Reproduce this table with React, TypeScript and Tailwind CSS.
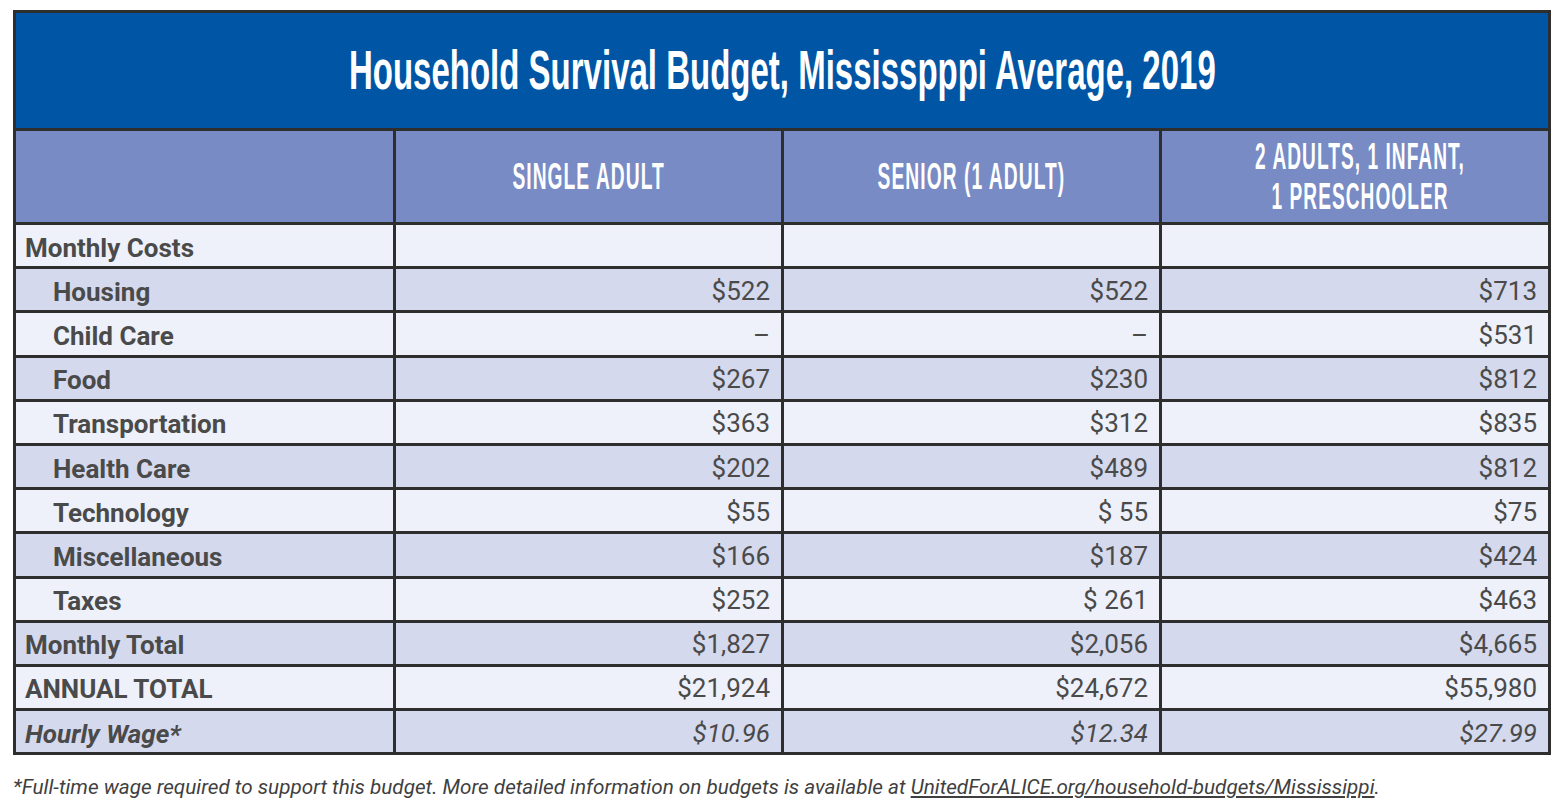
const rows: { label: string; vals: string[]; kind: 'head' | 'item' | 'total' | 'wage' }[] = [
  { label: 'Monthly Costs', vals: ['', '', ''], kind: 'head' },
  { label: 'Housing', vals: ['$522', '$522', '$713'], kind: 'item' },
  { label: 'Child Care', vals: ['–', '–', '$531'], kind: 'item' },
  { label: 'Food', vals: ['$267', '$230', '$812'], kind: 'item' },
  { label: 'Transportation', vals: ['$363', '$312', '$835'], kind: 'item' },
  { label: 'Health Care', vals: ['$202', '$489', '$812'], kind: 'item' },
  { label: 'Technology', vals: ['$55', '$ 55', '$75'], kind: 'item' },
  { label: 'Miscellaneous', vals: ['$166', '$187', '$424'], kind: 'item' },
  { label: 'Taxes', vals: ['$252', '$ 261', '$463'], kind: 'item' },
  { label: 'Monthly Total', vals: ['$1,827', '$2,056', '$4,665'], kind: 'total' },
  { label: 'ANNUAL TOTAL', vals: ['$21,924', '$24,672', '$55,980'], kind: 'total' },
  { label: 'Hourly Wage*', vals: ['$10.96', '$12.34', '$27.99'], kind: 'wage' },
];

const cols = ['SINGLE ADULT', 'SENIOR (1 ADULT)'];

export default function App() {
  return (
    <div className="w-[1567px] h-[807px] bg-white pt-[10px] pl-[13px] font-['Roboto',sans-serif] text-[#4a4a4a]">
      <table className="w-[1538px] border-collapse border-[3px] border-[#2e2e2e] table-fixed">
        <colgroup>
          <col className="w-[380px]" />
          <col className="w-[388px]" />
          <col className="w-[378px]" />
          <col />
        </colgroup>
        <thead>
          <tr>
            <th colSpan={4} className="h-[118px] bg-[#0055a5] border-[3px] border-[#2e2e2e] p-0">
              <span className="inline-block scale-x-[0.6] scale-y-[1.02] font-['Liberation_Sans_Narrow','Liberation_Sans',sans-serif] text-[55px] font-bold text-white whitespace-nowrap">
                Household Survival Budget, Mississpppi Average, 2019
              </span>
            </th>
          </tr>
          <tr>
            <th className="h-[94px] bg-[#798bc4] border-[3px] border-[#2e2e2e]"></th>
            {cols.map((c) => (
              <th key={c} className="h-[94px] bg-[#798bc4] border-[3px] border-[#2e2e2e] p-0">
                <span className="inline-block scale-x-[0.52] font-['Liberation_Sans_Narrow','Liberation_Sans',sans-serif] text-[37px] font-bold text-white whitespace-nowrap leading-none tracking-[2px]">
                  {c}
                </span>
              </th>
            ))}
            <th className="h-[94px] bg-[#798bc4] border-[3px] border-[#2e2e2e] p-0">
              <span className="inline-block scale-x-[0.53] font-['Liberation_Sans_Narrow','Liberation_Sans',sans-serif] text-[36px] font-bold text-white whitespace-nowrap leading-[40px] tracking-[2px]">
                2 ADULTS, 1 INFANT,
                <br />1 PRESCHOOLER
              </span>
            </th>
          </tr>
        </thead>
        <tbody>
          {rows.map((r, i) => {
            const bg = i % 2 === 0 ? 'bg-[#eef1f9]' : 'bg-[#d4d9ed]';
            const labelCls =
              r.kind === 'item'
                ? 'pl-[37px] font-bold'
                : r.kind === 'wage'
                ? 'pl-[9px] font-bold italic'
                : 'pl-[9px] font-bold';
            return (
              <tr key={r.label} className={`h-[44.2px] ${bg}`}>
                <td className={`border-[3px] border-[#2e2e2e] text-[26px] pt-[4px] leading-none ${labelCls}`}>
                  {r.label}
                </td>
                {r.vals.map((v, j) => (
                  <td
                    key={j}
                    className={`border-[3px] border-[#2e2e2e] text-right pr-[11px] text-[26px] pt-[2px] leading-none ${
                      r.kind === 'wage' ? 'italic' : ''
                    }`}
                  >
                    {v}
                  </td>
                ))}
              </tr>
            );
          })}
        </tbody>
      </table>
      <p className="mt-[22px] text-[20.7px] italic text-[#3f3f3f] leading-none">
        *Full-time wage required to support this budget. More detailed information on budgets is available at{' '}
        <span className="underline">UnitedForALICE.org/household-budgets/Mississippi</span>.
      </p>
    </div>
  );
}
